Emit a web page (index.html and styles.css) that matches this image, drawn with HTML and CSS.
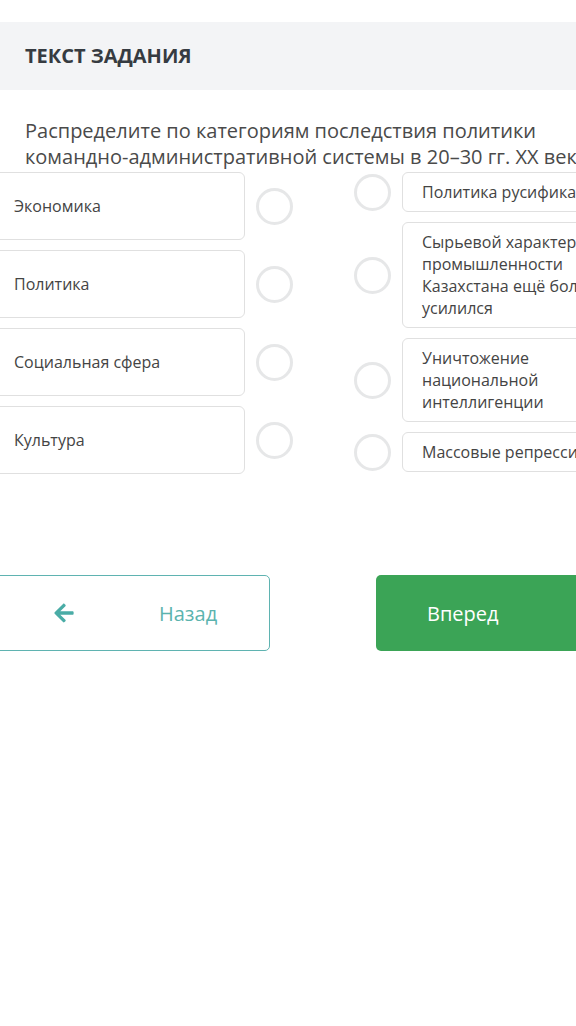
FILE: index.html
```html
<!DOCTYPE html>
<html lang="ru">
<head>
  <meta charset="UTF-8" />
  <title>Текст задания</title>
  <link rel="stylesheet" href="styles.css">
</head>
<body>
  <div class="task">
    <div class="task-header">ТЕКСТ ЗАДАНИЯ</div>
    <p class="task-text">Распределите по категориям последствия политики командно-административной системы в 20–30 гг. XX века</p>

    <div class="match">
      <div class="col col-left">
        <div class="row"><div class="item item-cat">Экономика</div><span class="dot"></span></div>
        <div class="row"><div class="item item-cat">Политика</div><span class="dot"></span></div>
        <div class="row"><div class="item item-cat">Социальная сфера</div><span class="dot"></span></div>
        <div class="row"><div class="item item-cat">Культура</div><span class="dot"></span></div>
      </div>
      <div class="col col-right">
        <div class="row"><span class="dot"></span><div class="item">Политика русификации</div></div>
        <div class="row"><span class="dot"></span><div class="item">Сырьевой характер промышленности Казахстана ещё больше усилился</div></div>
        <div class="row"><span class="dot"></span><div class="item">Уничтожение национальной интеллигенции</div></div>
        <div class="row"><span class="dot"></span><div class="item">Массовые репрессии</div></div>
      </div>
    </div>

    <div class="nav">
      <button class="btn btn-back">
        <svg class="arrow" viewBox="0 0 448 512" width="20" height="22"><path fill="currentColor" d="M257.5 445.1l-22.2 22.2c-9.4 9.4-24.6 9.4-33.9 0L7 273c-9.4-9.4-9.4-24.6 0-33.9L201.4 44.7c9.4-9.4 24.6-9.4 33.9 0l22.2 22.2c9.5 9.5 9.3 25-.4 34.3L136.6 216H424c13.3 0 24 10.7 24 24v32c0 13.3-10.7 24-24 24H136.6l120.5 114.8c9.8 9.3 10 24.8.4 34.3z"/></svg>
        <span class="btn-label">Назад</span>
      </button>
      <button class="btn btn-next">Вперед</button>
    </div>
  </div>
</body>
</html>
```

FILE: styles.css
```css
body {
  margin: 0;
  background: #fff;
  font-family: "Open Sans", "Noto Sans", sans-serif;
  overflow: hidden;
}
.task {
  padding-top: 22px;
}
.task-header {
  background: #f3f4f6;
  height: 68px;
  line-height: 68px;
  padding-left: 25px;
  font-size: 20px;
  font-weight: 700;
  color: #363b41;
}
.task-text {
  margin: 28px 0 2px 25px;
  width: 580px;
  font-size: 20px;
  line-height: 26px;
  color: #4a4a4a;
}
.match {
  display: flex;
  margin-left: -6px;
  gap: 61px;
}
.col {
  display: flex;
  flex-direction: column;
  gap: 10px;
  flex-shrink: 0;
}
.row {
  display: flex;
  align-items: center;
  gap: 11px;
}
.item {
  box-sizing: border-box;
  width: 232px;
  padding: 8px 19px;
  border: 1px solid #e0e0e0;
  border-radius: 6px;
  font-size: 16px;
  line-height: 22px;
  color: #444;
  flex-shrink: 0;
}
.item-cat {
  width: 251px;
  height: 68px;
  display: flex;
  align-items: center;
}
.dot {
  box-sizing: border-box;
  width: 37px;
  height: 37px;
  border: 3px solid #e6e7e8;
  border-radius: 50%;
  flex-shrink: 0;
}
.nav {
  display: flex;
  gap: 106px;
  margin: 101px 0 0 -20px;
}
.btn {
  box-sizing: border-box;
  width: 290px;
  height: 76px;
  border-radius: 5px;
  font-family: inherit;
  font-size: 20px;
  flex-shrink: 0;
  cursor: pointer;
}
.btn-back {
  display: flex;
  align-items: center;
  background: #fff;
  border: 1px solid #5fb3b1;
  color: #5bb3ae;
  padding: 0 0 0 73px;
}
.btn-back .arrow {
  color: #4aaca6;
}
.btn-label {
  margin-left: 85px;
}
.btn-next {
  background: #3ba456;
  border: none;
  color: #fff;
  text-align: left;
  padding-left: 51px;
}
```
